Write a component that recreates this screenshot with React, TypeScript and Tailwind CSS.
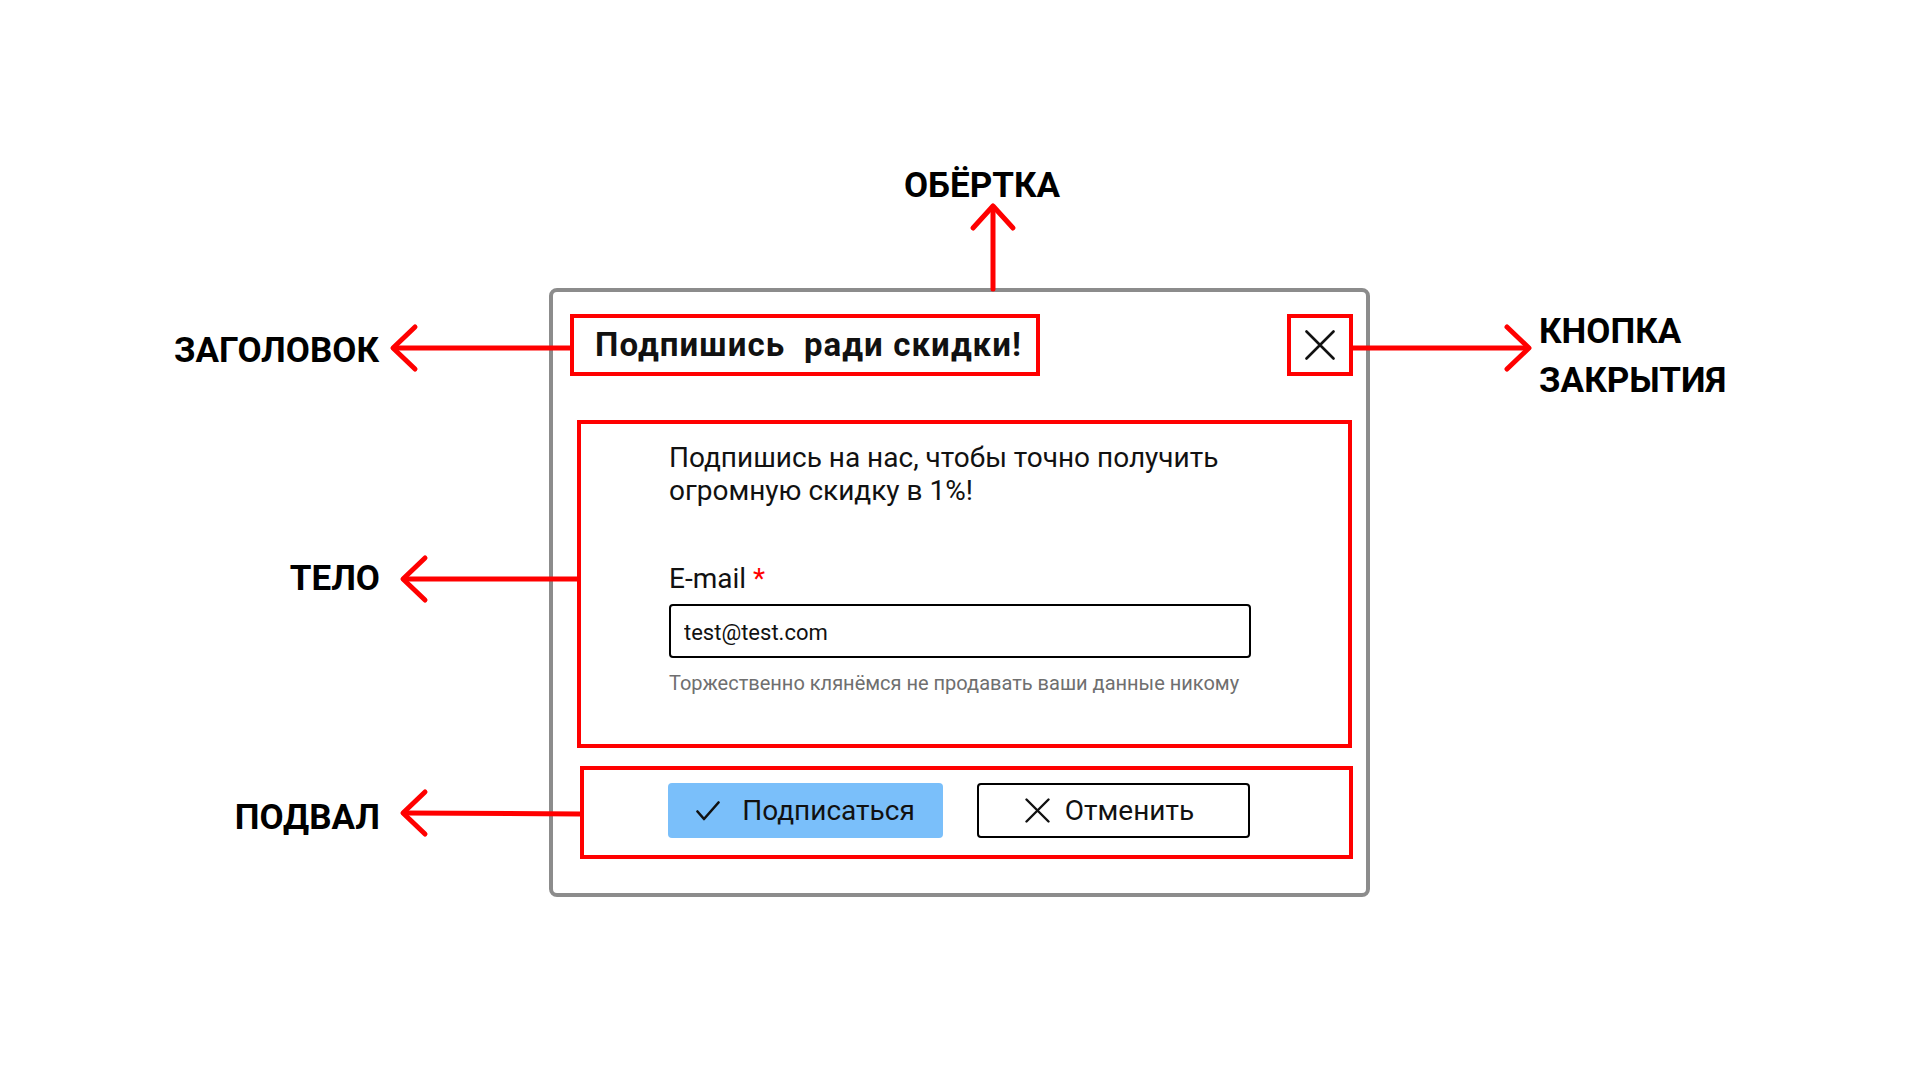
import React from "react";

// красные стрелки-выноски поверх макета
const ARROWS = [
  { line: "M993 289 L993 207", head: "M973 228 L993 206 L1013 228" },
  { line: "M571 348 L394 348", head: "M415 327 L393 348 L415 369" },
  { line: "M577 579 L404 579", head: "M425 558 L403 579 L425 600" },
  { line: "M580 814 L404 813", head: "M425 792 L403 813 L425 834" },
  { line: "M1353 348 L1528 348", head: "M1507 327 L1529 348 L1507 369" },
];

const labelCls = "absolute text-[35px] leading-[35px] font-bold text-black";

function CheckIcon() {
  return (
    <svg width="24" height="20" viewBox="0 0 24 20" fill="none">
      <path d="M1.5 10.5 L8 18 L22.5 1.5" stroke="#111" strokeWidth="2.6" strokeLinecap="round" strokeLinejoin="round" />
    </svg>
  );
}

function CrossIcon({ size, stroke }: { size: number; stroke: number }) {
  return (
    <svg width={size} height={size} viewBox={`0 0 ${size} ${size}`} fill="none">
      <path
        d={`M1.5 1.5 L${size - 1.5} ${size - 1.5} M${size - 1.5} 1.5 L1.5 ${size - 1.5}`}
        stroke="#111"
        strokeWidth={stroke}
        strokeLinecap="round"
      />
    </svg>
  );
}

export default function App() {
  return (
    <div className="relative w-[1920px] h-[1080px] bg-white overflow-hidden font-['Roboto',sans-serif] text-[#111]">
      {/* Обёртка */}
      <div className="ml-[549px] pt-[288px]">
        <div className="w-[821px] h-[609px] border-4 border-[#8c8c8c] rounded-[8px] flex flex-col bg-white">
          {/* Заголовок */}
          <div className="mt-[22px] pl-[17px] flex items-center">
            <div className="w-[470px] h-[62px] border-4 border-[#ff0000] pl-[21px] flex items-center">
              <span className="text-[33px] font-bold whitespace-pre tracking-[1.1px]">Подпишись  ради скидки!</span>
            </div>
            <div className="ml-auto mr-[13px] w-[66px] h-[62px] border-4 border-[#ff0000] flex items-center justify-center">
              <CrossIcon size={30} stroke={2.6} />
            </div>
          </div>

          {/* Тело */}
          <div className="mt-[44px] ml-[24px] w-[775px] h-[328px] border-4 border-[#ff0000] pl-[88px] pt-[17px]">
            <div className="w-[582px]">
              <p className="text-[28px] leading-[33px]">
                Подпишись на нас, чтобы точно получить
                <br />
                огромную скидку в 1%!
              </p>
              <div className="mt-[55px] text-[28px] leading-[33px]">
                E-mail <span className="text-[#ff0000]">*</span>
              </div>
              <input
                readOnly
                value="test@test.com"
                className="mt-[9px] w-full h-[54px] border-2 border-black rounded-[4px] px-[13px] pt-[3px] text-[22px] text-[#111] outline-none"
              />
              <div className="mt-[13px] text-[20px] leading-[25px] text-[#6f6f6f] whitespace-nowrap">
                Торжественно клянёмся не продавать ваши данные никому
              </div>
            </div>
          </div>

          {/* Подвал */}
          <div className="mt-[18px] ml-[27px] w-[773px] h-[93px] border-4 border-[#ff0000] pl-[84px] pt-[13px] flex items-start gap-[34px]">
            <button className="w-[275px] h-[55px] rounded-[4px] bg-[#7abffa] flex items-center justify-center gap-[22px] text-[28px]">
              <CheckIcon />
              <span>Подписаться</span>
            </button>
            <button className="w-[273px] h-[55px] rounded-[4px] border-2 border-black bg-white flex items-center justify-center gap-[15px] pr-[8px] text-[28px]">
              <CrossIcon size={25} stroke={2.4} />
              <span>Отменить</span>
            </button>
          </div>
        </div>
      </div>

      {/* Стрелки */}
      <svg className="absolute inset-0 pointer-events-none" width="1920" height="1080" fill="none">
        {ARROWS.map((a, i) => (
          <g key={i} stroke="#ff0000" strokeWidth="5" strokeLinecap="round" strokeLinejoin="round">
            <path d={a.line} />
            <path d={a.head} />
          </g>
        ))}
      </svg>

      {/* Подписи */}
      <div className={`${labelCls} left-[860px] w-[244px] top-[168px] text-center`}>ОБЁРТКА</div>
      <div className={`${labelCls} left-0 w-[379px] top-[333px] text-right`}>ЗАГОЛОВОК</div>
      <div className={`${labelCls} left-0 w-[380px] top-[561px] text-right`}>ТЕЛО</div>
      <div className={`${labelCls} left-0 w-[380px] top-[800px] text-right`}>ПОДВАЛ</div>
      <div className={`${labelCls} left-[1539px] top-[307px] leading-[49px]`}>
        КНОПКА
        <br />
        ЗАКРЫТИЯ
      </div>
    </div>
  );
}
